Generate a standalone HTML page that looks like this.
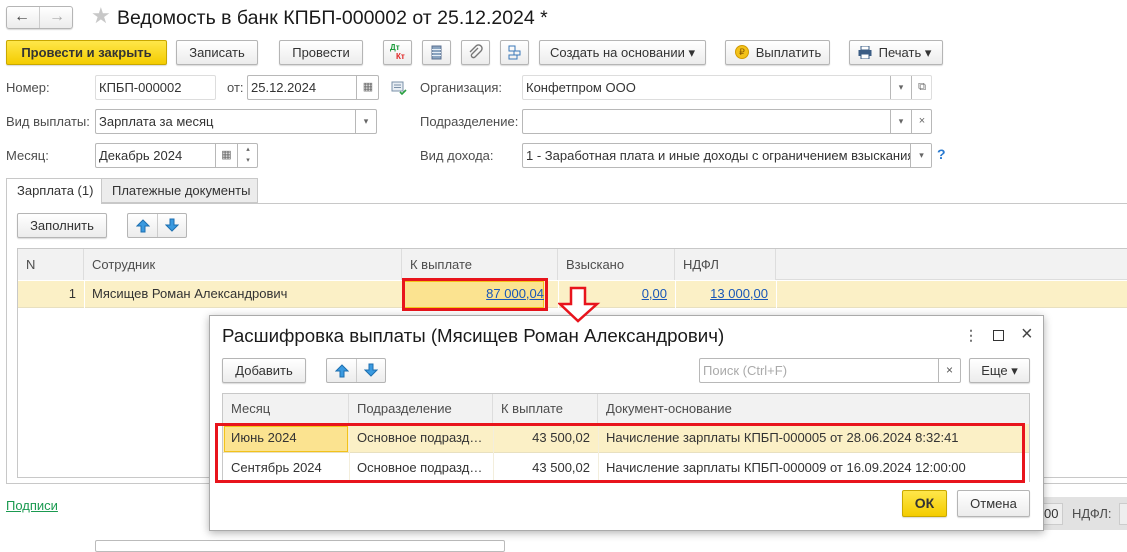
<!DOCTYPE html>
<html><head><meta charset="utf-8"><style>
*{box-sizing:border-box;margin:0;padding:0}
body{width:1127px;height:547px;overflow:hidden;background:#fff;font-family:"Liberation Sans",Arial,sans-serif;font-size:13px;color:#4d4d4d;position:relative}
.a{position:absolute}
.btn{position:absolute;height:25px;border:1px solid #b5b5b5;border-radius:2px;background:linear-gradient(#fff,#ececec);box-shadow:0 1px 1px rgba(0,0,0,.15);text-align:center;line-height:23px;color:#333;white-space:nowrap}
.yb{background:linear-gradient(#ffe74a,#f4cc00);border-color:#c9a800;color:#333}
.fld{position:absolute;height:25px;border:1px solid #b8b8b8;border-radius:2px;background:#fff;line-height:23px;padding-left:3px;color:#333;white-space:nowrap;overflow:hidden}
.sb{position:absolute;top:0;height:23px;border-left:1px solid #b8b8b8;text-align:center;font-size:9px;color:#666}
.lbl{position:absolute;color:#4d4d4d}
.th{position:absolute;background:#f2f2f2;border-right:1px solid #ddd;line-height:31px;padding-left:8px;color:#4d4d4d}
.cell{position:absolute;line-height:28px;padding:0 8px;white-space:nowrap;color:#333}
.lnk{color:#1a57b8;text-decoration:underline}
.arr{position:absolute;border:1px solid #b5b5b5;border-radius:2px;background:linear-gradient(#fff,#ececec);height:25px}
</style></head><body>
<!-- title -->
<div class="btn" style="left:6px;top:6px;width:67px;height:23px;border-radius:3px"></div>
<div class="a" style="left:39px;top:7px;width:1px;height:21px;background:#ccc"></div>
<div class="a" style="left:14px;top:6px;font-size:16px;color:#444;line-height:22px">&#8592;</div>
<div class="a" style="left:49px;top:6px;font-size:16px;color:#aaa;line-height:22px">&#8594;</div>
<div class="a" style="left:91px;top:4px;font-size:22px;color:#c8c8c8;line-height:24px">&#9733;</div>
<div class="a" style="left:117px;top:6px;font-size:19.5px;color:#1a1a1a;line-height:24px">Ведомость в банк КПБП-000002 от 25.12.2024 *</div>
<!-- toolbar -->
<div class="btn yb" style="left:6px;top:40px;width:161px;font-size:13px;font-weight:bold">Провести и закрыть</div>
<div class="btn" style="left:176px;top:40px;width:82px">Записать</div>
<div class="btn" style="left:279px;top:40px;width:84px">Провести</div>
<div class="btn" style="left:383px;top:40px;width:29px"><span style="position:absolute;left:6px;top:-5px;font-size:8px;color:#1a9a3a;font-weight:bold">Дт</span><span style="position:absolute;left:12px;top:4px;font-size:8px;color:#e02020;font-weight:bold">Кт</span></div>
<div class="btn" style="left:422px;top:40px;width:29px"><svg width="27" height="23"><rect x="9" y="5" width="9" height="13" fill="#8aa4c0" stroke="#5a7090"/><path d="M9 8.5h9M9 11.5h9M9 14.5h9" stroke="#e6eef6"/></svg></div>
<div class="btn" style="left:461px;top:40px;width:29px"><svg width="27" height="23"><path d="M16 7l-6 6a2 2 0 0 0 3 3l6-6a3.5 3.5 0 0 0-5-5l-6 6" fill="none" stroke="#777" stroke-width="1.4"/></svg></div>
<div class="btn" style="left:500px;top:40px;width:29px"><svg width="27" height="23"><rect x="8" y="5" width="6" height="5" fill="none" stroke="#3a78b8"/><rect x="13" y="10" width="6" height="4" fill="none" stroke="#3a78b8"/><rect x="8" y="14" width="8" height="4" fill="none" stroke="#3a78b8"/></svg></div>
<div class="btn" style="left:539px;top:40px;width:167px">Создать на основании &#9662;</div>
<div class="btn" style="left:725px;top:40px;width:105px;padding-left:22px">Выплатить<span style="position:absolute;left:9px;top:4px;width:14px;height:14px;border-radius:50%;background:#f3c21a;border:1px solid #d19a00;font-size:9px;line-height:12px;color:#8a5a00">₽</span></div>
<div class="btn" style="left:849px;top:40px;width:94px;padding-left:18px">Печать &#9662;<svg class="a" style="left:8px;top:5px" width="14" height="13"><rect x="3" y="0" width="8" height="4" fill="#fff" stroke="#3b5d85"/><rect x="0.5" y="4" width="13" height="6" fill="#3b5d85"/><rect x="3" y="8" width="8" height="5" fill="#fff" stroke="#3b5d85"/></svg></div>
<!-- row1 -->
<div class="lbl" style="left:6px;top:80px">Номер:</div>
<div class="fld" style="left:95px;top:75px;width:121px;border-color:#ddd">КПБП-000002</div>
<div class="lbl" style="left:227px;top:80px">от:</div>
<div class="fld" style="left:247px;top:75px;width:132px">25.12.2024<div class="sb" style="left:108px;width:23px;font-size:11px">▦</div></div>
<svg class="a" style="left:391px;top:80px" width="16" height="16"><rect x="1" y="2" width="11" height="9" fill="#e8eef4" stroke="#7a90a8"/><path d="M3 5h7M3 7.5h7" stroke="#7a90a8"/><path d="M9 12l2 2 4-4" stroke="#2aa040" stroke-width="1.6" fill="none"/></svg>
<div class="lbl" style="left:420px;top:80px">Организация:</div>
<div class="fld" style="left:522px;top:75px;width:410px;border-color:#ddd">Конфетпром ООО<div class="sb" style="left:367px;width:21px">▾</div><div class="sb" style="left:388px;width:21px;font-size:11px">⧉</div></div>
<!-- row2 -->
<div class="lbl" style="left:6px;top:114px">Вид выплаты:</div>
<div class="fld" style="left:95px;top:109px;width:282px">Зарплата за месяц<div class="sb" style="left:259px;width:21px">▾</div></div>
<div class="lbl" style="left:420px;top:114px">Подразделение:</div>
<div class="fld" style="left:522px;top:109px;width:410px"><div class="sb" style="left:367px;width:21px">▾</div><div class="sb" style="left:388px;width:21px;font-size:11px">×</div></div>
<!-- row3 -->
<div class="lbl" style="left:6px;top:148px">Месяц:</div>
<div class="fld" style="left:95px;top:143px;width:163px">Декабрь 2024<div class="sb" style="left:119px;width:22px;font-size:11px">▦</div><div class="sb" style="left:141px;width:21px;line-height:11px;font-size:7px">▴<br>▾</div></div>
<div class="lbl" style="left:420px;top:148px">Вид дохода:</div>
<div class="fld" style="left:522px;top:143px;width:410px">1 - Заработная плата и иные доходы с ограничением взыскания<div class="sb" style="left:387px;width:22px;background:#fff">▾</div></div>
<div class="a" style="left:937px;top:146px;color:#2a7ad0;font-size:14px;font-weight:bold">?</div>
<!-- tabs -->
<div class="a" style="left:6px;top:203px;width:1121px;height:281px;border:1px solid #c8c8c8;border-right:none"></div>
<div class="a" style="left:6px;top:178px;width:96px;height:26px;border:1px solid #c8c8c8;border-bottom:none;background:#fff;line-height:24px;padding-left:10px;color:#333">Зарплата (1)</div>
<div class="a" style="left:102px;top:178px;width:156px;height:25px;border:1px solid #c8c8c8;border-left:none;background:#ececec;line-height:23px;padding-left:10px;color:#333">Платежные документы</div>
<div class="btn" style="left:17px;top:213px;width:90px">Заполнить</div>
<div class="arr" style="left:127px;top:213px;width:60px"><div class="a" style="left:29px;top:0;width:1px;height:23px;background:#ccc"></div><svg class="a" style="left:8px;top:5px" width="14" height="14"><path d="M7 1l6 6H9v6H5V7H1z" fill="#3a9ae0" stroke="#1d6fb0"/></svg><svg class="a" style="left:37px;top:4px" width="14" height="14"><path d="M7 13l6-6H9V1H5v6H1z" fill="#3a9ae0" stroke="#1d6fb0"/></svg></div>
<!-- main table -->
<div class="a" style="left:17px;top:248px;width:1110px;height:230px;border:1px solid #c8c8c8;border-right:none"></div>
<div class="a" style="left:18px;top:249px;width:1109px;height:31px;background:#f2f2f2;border-bottom:1px solid #ddd"></div>
<div class="th" style="left:18px;top:249px;width:66px;height:31px">N</div>
<div class="th" style="left:84px;top:249px;width:318px;height:31px">Сотрудник</div>
<div class="th" style="left:402px;top:249px;width:156px;height:31px">К выплате</div>
<div class="th" style="left:558px;top:249px;width:117px;height:31px">Взыскано</div>
<div class="th" style="left:675px;top:249px;width:101px;height:31px">НДФЛ</div>
<div class="a" style="left:18px;top:281px;width:1109px;height:27px;background:#fbf0c6;border-bottom:1px solid #e8e0c0"></div>
<div class="a" style="left:84px;top:281px;width:1px;height:27px;background:#fff"></div>
<div class="a" style="left:558px;top:281px;width:1px;height:27px;background:#fff"></div>
<div class="a" style="left:675px;top:281px;width:1px;height:27px;background:#fff"></div>
<div class="a" style="left:776px;top:281px;width:1px;height:27px;background:#fff"></div>
<div class="a" style="left:404px;top:281px;width:140px;height:27px;background:#fbe390;border:1px solid #f3c21a"></div>
<div class="cell" style="left:18px;top:280px;width:66px;text-align:right">1</div>
<div class="cell" style="left:84px;top:280px">Мясищев Роман Александрович</div>
<div class="cell lnk" style="left:402px;top:280px;width:156px;text-align:right;padding-right:14px">87 000,04</div>
<div class="cell lnk" style="left:558px;top:280px;width:117px;text-align:right">0,00</div>
<div class="cell lnk" style="left:675px;top:280px;width:101px;text-align:right">13 000,00</div>
<div class="a" style="left:402px;top:278px;width:146px;height:33px;border:3px solid #e8141c"></div>
<!-- bottom -->
<div class="a lnk" style="left:6px;top:498px;color:#1a9a50;text-decoration-color:#1a9a50">Подписи</div>
<div class="a" style="left:1040px;top:497px;width:87px;height:33px;background:#e2e2e2"></div>
<div class="a" style="left:1043px;top:503px;width:20px;height:22px;border:1px solid #ccc;background:#eee;line-height:20px;color:#333">00</div>
<div class="a" style="left:1072px;top:506px;color:#4d4d4d">НДФЛ:</div>
<div class="a" style="left:1119px;top:503px;width:10px;height:22px;border:1px solid #ccc;background:#eee"></div>
<div class="a" style="left:95px;top:540px;width:410px;height:12px;border:1px solid #bbb;border-radius:2px"></div>
<!-- dialog -->
<div class="a" style="left:209px;top:315px;width:835px;height:216px;background:#fff;border:1px solid #aaa;box-shadow:0 2px 8px rgba(0,0,0,.3)"></div>
<div class="a" style="left:222px;top:324px;font-size:18.7px;color:#1a1a1a;line-height:24px">Расшифровка выплаты (Мясищев Роман Александрович)</div>
<div class="a" style="left:964px;top:326px;color:#777;font-size:14px;line-height:18px;font-weight:bold">⋮</div>
<div class="a" style="left:993px;top:330px;width:11px;height:11px;border:1.5px solid #333"></div>
<div class="a" style="left:1021px;top:323px;font-size:20px;color:#444;line-height:22px">×</div>
<div class="btn" style="left:222px;top:358px;width:84px">Добавить</div>
<div class="arr" style="left:326px;top:358px;width:60px"><div class="a" style="left:29px;top:0;width:1px;height:23px;background:#ccc"></div><svg class="a" style="left:8px;top:5px" width="14" height="14"><path d="M7 1l6 6H9v6H5V7H1z" fill="#3a9ae0" stroke="#1d6fb0"/></svg><svg class="a" style="left:37px;top:4px" width="14" height="14"><path d="M7 13l6-6H9V1H5v6H1z" fill="#3a9ae0" stroke="#1d6fb0"/></svg></div>
<div class="fld" style="left:699px;top:358px;width:262px;color:#aaa">Поиск (Ctrl+F)<div class="sb" style="left:238px;width:22px;font-size:12px;color:#555">×</div></div>
<div class="btn" style="left:969px;top:358px;width:61px">Еще &#9662;</div>
<div class="a" style="left:222px;top:393px;width:808px;height:89px;border:1px solid #c8c8c8;border-bottom:none"></div>
<div class="th" style="left:223px;top:394px;width:126px;height:30px;line-height:30px">Месяц</div>
<div class="th" style="left:349px;top:394px;width:144px;height:30px;line-height:30px">Подразделение</div>
<div class="th" style="left:493px;top:394px;width:105px;height:30px;line-height:30px">К выплате</div>
<div class="th" style="left:598px;top:394px;width:431px;height:30px;line-height:30px;border-right:none">Документ-основание</div>
<div class="a" style="left:223px;top:424px;width:806px;height:29px;background:#fbf0c6;border-bottom:1px solid #e8e0c0"></div>
<div class="a" style="left:224px;top:426px;width:124px;height:26px;background:#fbe390;border:1px solid #f3c21a"></div>
<div class="a" style="left:349px;top:424px;width:1px;height:58px;background:#f3eedc"></div>
<div class="a" style="left:493px;top:424px;width:1px;height:58px;background:#f3eedc"></div>
<div class="a" style="left:598px;top:424px;width:1px;height:58px;background:#f3eedc"></div>
<div class="cell" style="left:223px;top:424px">Июнь 2024</div>
<div class="cell" style="left:349px;top:424px">Основное подразд…</div>
<div class="cell" style="left:493px;top:424px;width:105px;text-align:right">43 500,02</div>
<div class="cell" style="left:598px;top:424px">Начисление зарплаты КПБП-000005 от 28.06.2024 8:32:41</div>
<div class="cell" style="left:223px;top:454px">Сентябрь 2024</div>
<div class="cell" style="left:349px;top:454px">Основное подразд…</div>
<div class="cell" style="left:493px;top:454px;width:105px;text-align:right">43 500,02</div>
<div class="cell" style="left:598px;top:454px">Начисление зарплаты КПБП-000009 от 16.09.2024 12:00:00</div>
<div class="a" style="left:215px;top:423px;width:810px;height:60px;border:3px solid #e8141c"></div>
<div class="btn yb" style="left:902px;top:490px;width:45px;height:27px;line-height:25px;font-weight:bold;font-size:14px">ОК</div>
<div class="btn" style="left:957px;top:490px;width:73px;height:27px;line-height:25px">Отмена</div>
<!-- red arrow on top -->
<svg class="a" style="left:558px;top:286px" width="44" height="38"><path d="M13 2h14v16h12L20 35 2 18h11z" fill="#fff" stroke="#e8141c" stroke-width="2.5"/></svg>
</body></html>
